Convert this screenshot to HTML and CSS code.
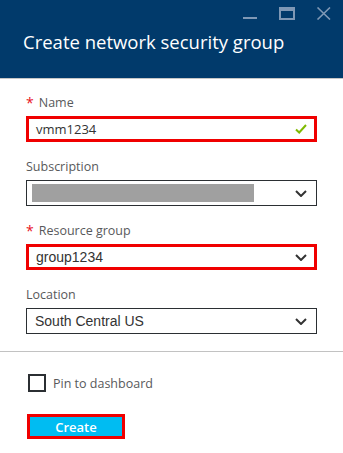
FILE: index.html
```html
<!DOCTYPE html>
<html>
<head>
<meta charset="utf-8">
<link rel="stylesheet" href="styles.css">
</head>
<body>
<div class="blade">
  <header class="header">
    <div class="controls">
      <svg class="ctl" width="15" height="13" viewBox="0 0 15 13"><rect x="0" y="10" width="14" height="2" fill="#7f98b5"/></svg>
      <svg class="ctl" width="16" height="13" viewBox="0 0 16 13"><rect x="1" y="1" width="14" height="11" fill="none" stroke="#7f98b5" stroke-width="2"/><rect x="1" y="1" width="14" height="3" fill="#7f98b5"/></svg>
      <svg class="ctl" width="16" height="13" viewBox="0 0 16 13"><path d="M1.5 0.5 L14 12.5 M14 0.5 L1.5 12.5" stroke="#7f98b5" stroke-width="1.6" fill="none"/></svg>
    </div>
    <h1 class="title">Create network security group</h1>
  </header>
  <main class="form">
    <div class="group">
      <label class="label"><span class="req">*</span>Name</label>
      <div class="field field-hl field-text">
        <span class="value value-segoe">vmm1234</span>
        <svg class="check" width="12" height="10" viewBox="0 0 12 10"><path d="M1 5.5 L4.2 8.5 L11 1" stroke="#7fba00" stroke-width="2" fill="none"/></svg>
      </div>
    </div>
    <div class="group">
      <label class="label">Subscription</label>
      <div class="field field-sub">
        <span class="masked"></span>
        <svg class="chev" width="12" height="7" viewBox="0 0 12 7"><path d="M1 1 L6 6 L11 1" stroke="#333" stroke-width="2" fill="none"/></svg>
      </div>
    </div>
    <div class="group">
      <label class="label"><span class="req">*</span>Resource group</label>
      <div class="field field-hl">
        <span class="value">group1234</span>
        <svg class="chev" width="12" height="7" viewBox="0 0 12 7"><path d="M1 1 L6 6 L11 1" stroke="#333" stroke-width="2" fill="none"/></svg>
      </div>
    </div>
    <div class="group">
      <label class="label">Location</label>
      <div class="field">
        <span class="value">South Central US</span>
        <svg class="chev" width="12" height="7" viewBox="0 0 12 7"><path d="M1 1 L6 6 L11 1" stroke="#333" stroke-width="2" fill="none"/></svg>
      </div>
    </div>
  </main>
  <footer class="footer">
    <div class="pin"><span class="box"></span><span class="pin-text">Pin to dashboard</span></div>
    <button class="create">Create</button>
  </footer>
</div>
</body>
</html>
```
FILE: styles.css
```css
* { box-sizing: border-box; }
html, body { margin: 0; padding: 0; background: #fff; }
body { width: 343px; height: 453px; overflow: hidden; font-family: "Open Sans", "Noto Sans", sans-serif; }
.header {
  height: 79px;
  background: #013a6b;
  border-bottom: 1px solid #c6c6c6;
  padding: 7px 11px 0 23px;
}
.controls { display: flex; justify-content: flex-end; gap: 21px; height: 13px; }
.ctl { display: block; }
.title {
  margin: 10px 0 0 0;
  font-weight: normal;
  font-size: 18.5px;
  line-height: 24px;
  color: #fff;
}
.form { padding: 16px 26px 0 26px; display: flex; flex-direction: column; gap: 17px; }
.group { display: flex; flex-direction: column; gap: 5px; }
.label { font-size: 12.5px; line-height: 16px; color: #58595b; display: flex; align-items: center; }
.req { color: #e81123; font-size: 14px; margin-right: 5px; line-height: 16px; }
.field {
  height: 26px;
  border: 1px solid #2b2f33;
  display: flex;
  align-items: center;
  padding: 0 9px 0 8px;
  justify-content: space-between;
}
.field-sub { padding-left: 5px; }
.field-hl { border: 3px solid #f00000; padding-left: 7px; padding-right: 7px; }
.value { font-family: "Liberation Sans", Arial, sans-serif; font-size: 14px; color: #333; }
.value-segoe { font-family: "Open Sans", sans-serif; font-size: 13px; }
.masked { width: 222px; height: 18px; background: #a0a0a0; }
.chev { display: block; }
.check { display: block; }
.footer { border-top: 1px solid #c2c2c2; margin-top: 17px; padding: 22px 26px 0 26px; }
.pin { display: flex; align-items: center; gap: 7px; padding-left: 2px; }
.box { width: 18px; height: 18px; border: 2px solid #2b2f33; display: block; }
.pin-text { font-size: 12.5px; color: #58595b; }
.create {
  margin-top: 22px;
  margin-left: 1px;
  width: 98px;
  height: 25px;
  background: #00bcf2;
  border: 3px solid #f00000;
  color: #fff;
  font-family: "Open Sans", sans-serif;
  font-weight: 600;
  font-size: 13px;
  padding: 0;
  display: block;
}
```
